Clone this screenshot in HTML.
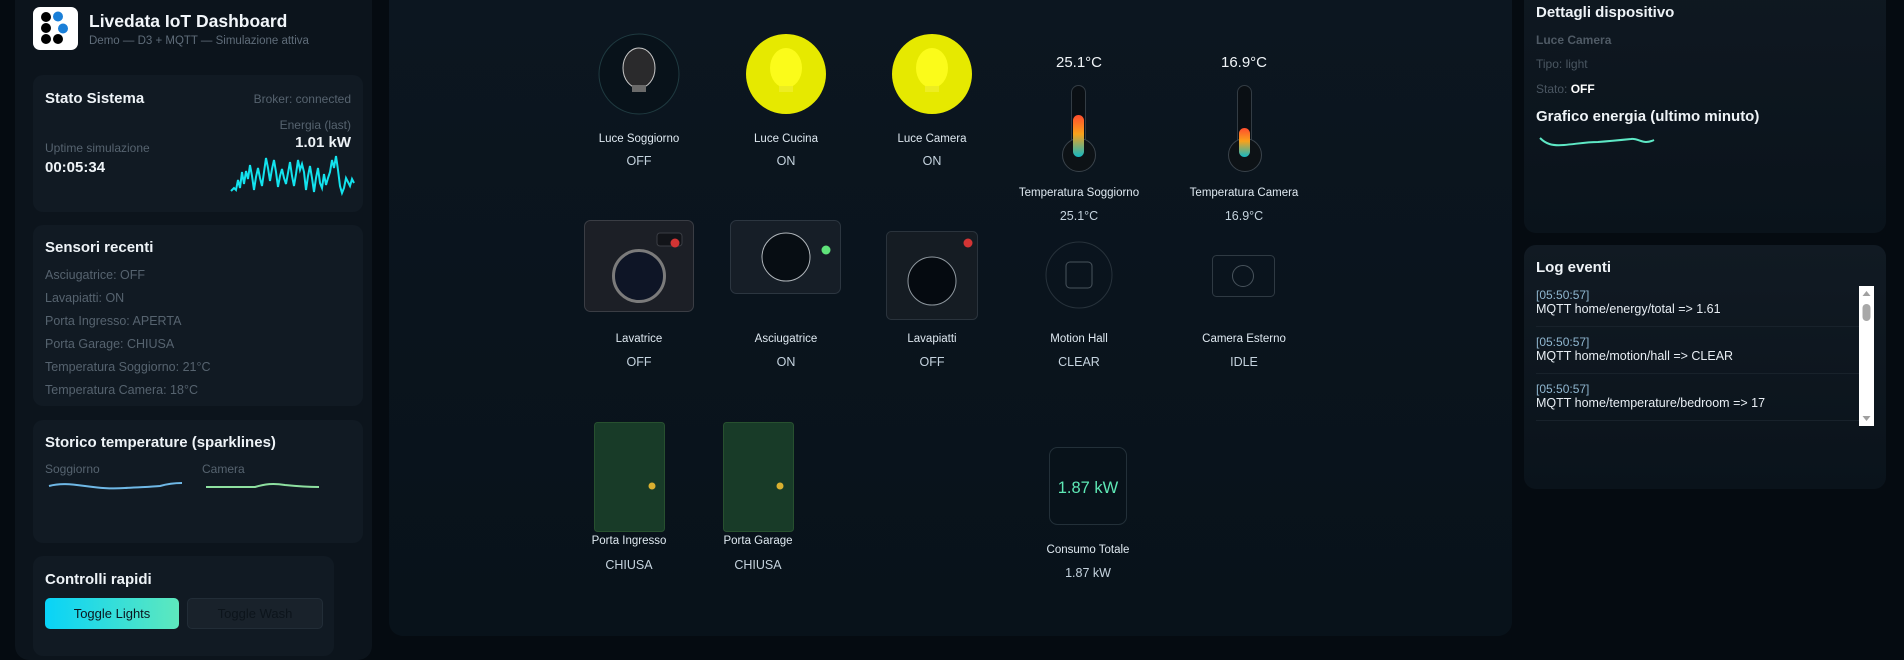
<!DOCTYPE html>
<html><head><meta charset="utf-8"><style>
*{margin:0;padding:0;box-sizing:border-box}
body{width:1904px;height:643px;overflow:hidden;background:#050b11;font-family:"Liberation Sans",sans-serif;color:#e8eef4;position:relative}
.a{position:absolute}
.side{left:15px;top:-20px;width:357px;height:680px;background:#0c141c;border-radius:14px}
.card{position:absolute;background:#111a23;border-radius:10px}
.h{position:absolute;font-weight:bold;font-size:15px;color:#eef3f7;white-space:nowrap}
.g{position:absolute;font-size:12px;color:#56636f;white-space:nowrap}
.main{left:389px;top:-20px;width:1123px;height:656px;background:linear-gradient(#0c1620,#08121a);border-radius:14px}
.lbl{position:absolute;font-size:11.5px;color:#dfe9f1;white-space:nowrap;transform:translateX(-50%)}
.st{position:absolute;font-size:12.5px;color:#c5d3de;white-space:nowrap;transform:translateX(-50%)}
.rc{position:absolute;left:1524px;width:362px;background:linear-gradient(#0f1821,#0a131b);border-radius:12px}
.log{position:absolute;left:1536px;width:320px;font-size:12.5px;white-space:nowrap}
.ts{color:#8fb6cf;font-size:12px}
</style></head><body>
<div class="a side"></div>
<div class="a" style="left:33px;top:7px;width:45px;height:43px;background:#fff;border-radius:7px"></div>
<svg class="a" style="left:0;top:0" width="90" height="60">
<circle cx="46" cy="17" r="5" fill="#000"/><circle cx="58" cy="16.5" r="5" fill="#1a7fd8"/>
<circle cx="46" cy="28" r="5" fill="#000"/><circle cx="63" cy="28.5" r="5" fill="#1a7fd8"/>
<circle cx="46" cy="39" r="5" fill="#000"/><circle cx="58" cy="39" r="5" fill="#000"/>
</svg>
<div class="a" style="left:89px;top:11px;font-size:17.5px;font-weight:bold;color:#f2f6fa">Livedata IoT Dashboard</div>
<div class="a" style="left:89px;top:35px;font-size:11.5px;color:#5f6c79">Demo — D3 + MQTT — Simulazione attiva</div>

<div class="card" style="left:33px;top:75px;width:330px;height:137px"></div>
<div class="h" style="left:45px;top:90px">Stato Sistema</div>
<div class="g" style="right:1553px;top:92px">Broker: connected</div>
<div class="g" style="right:1553px;top:118px">Energia (last)</div>
<div class="h" style="right:1553px;top:134px">1.01 kW</div>
<div class="g" style="left:45px;top:141px">Uptime simulazione</div>
<div class="h" style="left:45px;top:159px">00:05:34</div>
<svg class="a" style="left:230px;top:150px" width="125" height="48"><path d="M1 41 L4 38 L6 40 L8 30 L10 38 L12 22 L14 34 L16 21 L18 29 L20 15 L22 26 L24 40 L26 27 L28 18 L30 28 L32 36 L34 22 L36 8 L38 18 L40 31 L42 19 L44 10 L46 22 L48 37 L50 26 L52 19 L54 28 L56 34 L58 23 L60 12 L62 26 L64 36 L66 24 L68 10 L70 20 L72 14 L74 22 L76 40 L78 26 L80 16 L82 28 L84 42 L86 28 L88 18 L90 33 L92 38 L94 24 L96 35 L98 28 L100 22 L102 10 L104 18 L106 6 L108 20 L110 36 L112 43 L114 38 L116 28 L118 32 L120 36 L122 29 L124 33" fill="none" stroke="#13e3ee" stroke-width="2"/></svg>

<div class="card" style="left:33px;top:225px;width:330px;height:181px"></div>
<div class="h" style="left:45px;top:239px">Sensori recenti</div>
<div class="g" style="left:45px;top:268px;font-size:12.5px">Asciugatrice: OFF</div>
<div class="g" style="left:45px;top:291px;font-size:12.5px">Lavapiatti: ON</div>
<div class="g" style="left:45px;top:314px;font-size:12.5px">Porta Ingresso: APERTA</div>
<div class="g" style="left:45px;top:337px;font-size:12.5px">Porta Garage: CHIUSA</div>
<div class="g" style="left:45px;top:360px;font-size:12.5px">Temperatura Soggiorno: 21°C</div>
<div class="g" style="left:45px;top:383px;font-size:12.5px">Temperatura Camera: 18°C</div>

<div class="card" style="left:33px;top:420px;width:330px;height:123px"></div>
<div class="h" style="left:45px;top:434px">Storico temperature (sparklines)</div>
<div class="g" style="left:45px;top:462px">Soggiorno</div>
<div class="g" style="left:202px;top:462px">Camera</div>
<svg class="a" style="left:45px;top:478px" width="300" height="20"><path d="M4 8 C15 5 25 6 40 8 C55 10 65 11 80 10 C95 9 105 9 115 8 C122 6 128 5 137 5" fill="none" stroke="#6fb8e6" stroke-width="2"/><path d="M161 9 L210 9 C220 6 228 5 240 7 C250 8 262 9 274 9" fill="none" stroke="#8ee0a0" stroke-width="2"/></svg>

<div class="card" style="left:33px;top:556px;width:301px;height:100px"></div>
<div class="h" style="left:45px;top:571px">Controlli rapidi</div>
<div class="a" style="left:45px;top:598px;width:134px;height:31px;border-radius:5px;background:linear-gradient(90deg,#08d3f8,#5ee8bd);color:#0b1720;font-size:13px;text-align:center;line-height:31px">Toggle Lights</div>
<div class="a" style="left:187px;top:598px;width:136px;height:31px;border-radius:5px;background:#19222b;border:1px solid #222d37;color:#0c141b;font-size:13px;text-align:center;line-height:29px">Toggle Wash</div>

<div class="a main"></div>
<svg class="a" style="left:0;top:0" width="1904" height="643">
<defs><linearGradient id="tg" x1="0" y1="0" x2="0" y2="1"><stop offset="0" stop-color="#ff4d2e"/><stop offset=".45" stop-color="#f9a11b"/><stop offset="1" stop-color="#12b8c4"/></linearGradient></defs>
<circle cx="639" cy="74" r="40" fill="#08121a" stroke="#1f3a40" stroke-width="1"/>
<ellipse cx="639" cy="68" rx="16" ry="20" fill="#2a2a2c" stroke="#c8c8c8" stroke-width="1"/>
<rect x="632" y="85" width="14" height="7" fill="#6a6a6a"/>
<circle cx="786" cy="74" r="40" fill="#e6e900"/>
<ellipse cx="786" cy="68" rx="16" ry="20" fill="#fbfb1a"/><rect x="779" y="86" width="14" height="6" fill="#eded22"/>
<circle cx="932" cy="74" r="40" fill="#e6e900"/>
<ellipse cx="932" cy="68" rx="16" ry="20" fill="#fbfb1a"/><rect x="925" y="86" width="14" height="6" fill="#eded22"/>

<rect x="1071.5" y="85.5" width="14" height="70" rx="7" fill="#0a0f14" stroke="#333c44"/>
<circle cx="1079" cy="155" r="16.5" fill="#0d1216" stroke="#3a434b"/>
<rect x="1073" y="115" width="11" height="42" rx="5.5" fill="url(#tg)"/>
<rect x="1237.5" y="85.5" width="14" height="70" rx="7" fill="#0a0f14" stroke="#333c44"/>
<circle cx="1245" cy="155" r="16.5" fill="#0d1216" stroke="#3a434b"/>
<rect x="1239" y="128" width="11" height="29" rx="5.5" fill="url(#tg)"/>

<rect x="584.5" y="220.5" width="109" height="91" rx="6" fill="#1c1f26" stroke="#3a3d44"/>
<rect x="657" y="233" width="25" height="13" rx="3" fill="#121419" stroke="#3a3d44"/>
<circle cx="675" cy="243" r="4.5" fill="#d33434"/>
<circle cx="639" cy="276" r="25.5" fill="#0e1526" stroke="#7b7b7b" stroke-width="3"/>
<rect x="730.5" y="220.5" width="110" height="73" rx="6" fill="#161e27" stroke="#2c3640"/>
<circle cx="786" cy="257" r="24" fill="#070d13" stroke="#b0b6bb"/>
<circle cx="826" cy="250" r="4.5" fill="#5fe37a"/>
<rect x="886.5" y="231.5" width="91" height="88" rx="5" fill="#151c23" stroke="#2a333c"/>
<circle cx="968" cy="243" r="4.5" fill="#d33434"/>
<circle cx="932" cy="281" r="24" fill="#050a10" stroke="#8e979e"/>

<circle cx="1079" cy="275" r="33" fill="none" stroke="#27323b"/>
<rect x="1066" y="262" width="26" height="26" rx="4" fill="none" stroke="#48535c"/>
<rect x="1212.5" y="255.5" width="62" height="41" rx="4" fill="none" stroke="#2f3a43"/>
<circle cx="1243" cy="276" r="10.5" fill="none" stroke="#48535c"/>

<rect x="594.5" y="422.5" width="70" height="109" rx="3" fill="#183b28" stroke="#27502f"/>
<circle cx="652" cy="486" r="3.5" fill="#d9b030"/>
<rect x="723.5" y="422.5" width="70" height="109" rx="3" fill="#183b28" stroke="#27502f"/>
<circle cx="780" cy="486" r="3.5" fill="#d9b030"/>
<rect x="1049.5" y="447.5" width="77" height="77" rx="8" fill="#08121a" stroke="#233039"/>
<text x="1088" y="493" text-anchor="middle" font-family="Liberation Sans" font-size="16.5" fill="#5ee8b5">1.87 kW</text>
<text x="1079" y="67" text-anchor="middle" font-family="Liberation Sans" font-size="15" fill="#f0f4f7">25.1°C</text>
<text x="1244" y="67" text-anchor="middle" font-family="Liberation Sans" font-size="15" fill="#f0f4f7">16.9°C</text>
</svg>

<div class="lbl" style="left:639px;top:133px">Luce Soggiorno</div><div class="st" style="left:639px;top:154px">OFF</div>
<div class="lbl" style="left:786px;top:133px">Luce Cucina</div><div class="st" style="left:786px;top:154px">ON</div>
<div class="lbl" style="left:932px;top:133px">Luce Camera</div><div class="st" style="left:932px;top:154px">ON</div>
<div class="lbl" style="left:1079px;top:187px">Temperatura Soggiorno</div><div class="st" style="left:1079px;top:209px">25.1°C</div>
<div class="lbl" style="left:1244px;top:187px">Temperatura Camera</div><div class="st" style="left:1244px;top:209px">16.9°C</div>
<div class="lbl" style="left:639px;top:333px">Lavatrice</div><div class="st" style="left:639px;top:355px">OFF</div>
<div class="lbl" style="left:786px;top:333px">Asciugatrice</div><div class="st" style="left:786px;top:355px">ON</div>
<div class="lbl" style="left:932px;top:333px">Lavapiatti</div><div class="st" style="left:932px;top:355px">OFF</div>
<div class="lbl" style="left:1079px;top:333px">Motion Hall</div><div class="st" style="left:1079px;top:355px">CLEAR</div>
<div class="lbl" style="left:1244px;top:333px">Camera Esterno</div><div class="st" style="left:1244px;top:355px">IDLE</div>
<div class="lbl" style="left:629px;top:535px">Porta Ingresso</div><div class="st" style="left:629px;top:558px">CHIUSA</div>
<div class="lbl" style="left:758px;top:535px">Porta Garage</div><div class="st" style="left:758px;top:558px">CHIUSA</div>
<div class="lbl" style="left:1088px;top:544px">Consumo Totale</div><div class="st" style="left:1088px;top:566px">1.87 kW</div>

<div class="rc" style="top:-20px;height:253px"></div>
<div class="h" style="left:1536px;top:4px">Dettagli dispositivo</div>
<div class="g" style="left:1536px;top:33px;font-weight:bold;color:#4f5a65">Luce Camera</div>
<div class="g" style="left:1536px;top:57px;color:#4a5661">Tipo: light</div>
<div class="g" style="left:1536px;top:82px;color:#4a5661">Stato: <b style="color:#fff">OFF</b></div>
<div class="h" style="left:1536px;top:108px">Grafico energia (ultimo minuto)</div>
<svg class="a" style="left:1536px;top:130px" width="130" height="24"><path d="M4 8 C10 14 16 16 28 15 C40 14 50 12 62 12 C75 11 85 10 95 9 C100 8 105 12 110 12 C113 12 116 11 118 10" fill="none" stroke="#5ee8c5" stroke-width="2"/></svg>

<div class="rc" style="top:245px;height:244px;background:linear-gradient(#111a23,#0a131b)"></div>
<div class="h" style="left:1536px;top:259px">Log eventi</div>
<div class="log" style="top:288px"><div class="ts">[05:50:57]</div><div>MQTT home/energy/total =&gt; 1.61</div></div>
<div class="a" style="left:1536px;top:326px;width:323px;height:1px;background:#18222b"></div>
<div class="log" style="top:335px"><div class="ts">[05:50:57]</div><div>MQTT home/motion/hall =&gt; CLEAR</div></div>
<div class="a" style="left:1536px;top:373px;width:323px;height:1px;background:#18222b"></div>
<div class="log" style="top:382px"><div class="ts">[05:50:57]</div><div>MQTT home/temperature/bedroom =&gt; 17</div></div>
<div class="a" style="left:1536px;top:420px;width:323px;height:1px;background:#18222b"></div>
<div class="a" style="left:1859px;top:286px;width:15px;height:140px;background:#fff"></div>
<svg class="a" style="left:1859px;top:286px" width="15" height="140"><path d="M3.5 10 L7.5 5 L11.5 10 Z" fill="#a0a0a0"/><rect x="3.5" y="18" width="8" height="17" rx="4" fill="#a8a8a8"/><path d="M3.5 130 L7.5 135 L11.5 130 Z" fill="#a0a0a0"/></svg>
</body></html>
